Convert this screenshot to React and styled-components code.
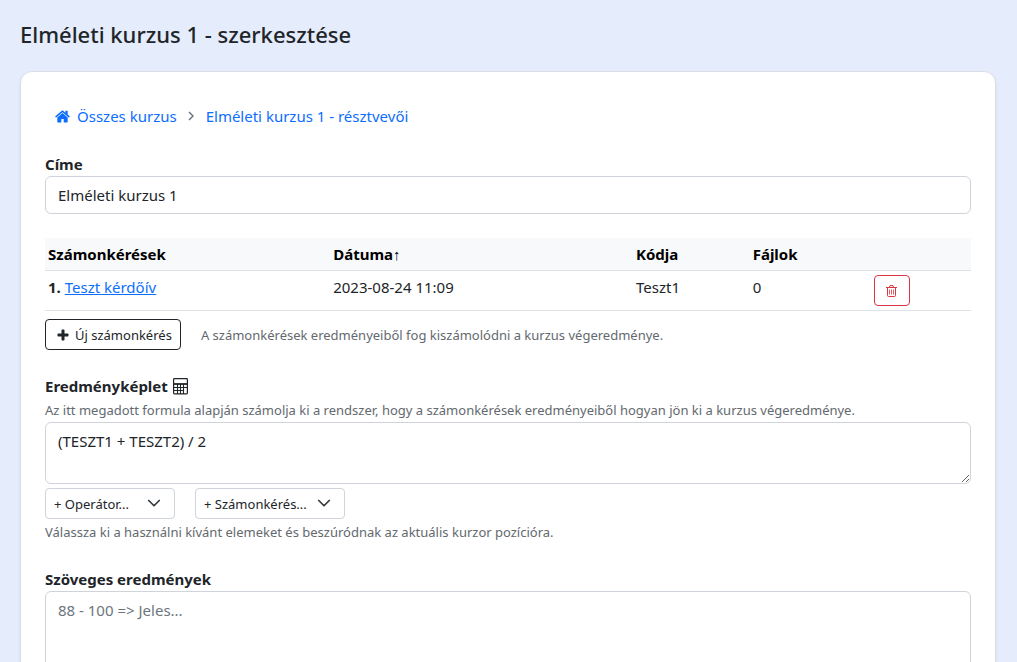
import React from "react";
import styled, { createGlobalStyle } from "styled-components";

const GlobalStyle = createGlobalStyle`
  *, *::before, *::after { box-sizing: border-box; }
  body {
    margin: 0;
    background: #e5ecfc;
    color: #212529;
    font-family: "Segoe UI", "Noto Sans", "Open Sans", sans-serif;
    font-size: 15px;
    line-height: 24px;
  }
  button, input, select, textarea { font: inherit; color: inherit; margin: 0; }
`;

const Page = styled.main`
  padding: 20px 21px 20px 20px;
`;

const Title = styled.h1`
  margin: 0 0 23px;
  font-size: 22px;
  font-weight: 500;
  line-height: 28px;
`;

const Card = styled.form`
  padding: 32px 24px 24px;
  background: #fff;
  border: 1px solid #dcdfe6;
  border-radius: 12px;
  box-shadow: 0 2px 4px rgba(0, 0, 0, 0.06);
`;

const Breadcrumb = styled.nav`
  display: flex;
  align-items: center;
  padding: 0 10px;
  margin-bottom: 24px;
`;

const CrumbLink = styled.a`
  display: inline-flex;
  align-items: center;
  gap: 7px;
  color: #0d6efd;
  text-decoration: none;
`;

const Separator = styled.svg`
  flex: none;
  margin: 0 12px 0 11px;
`;

const Field = styled.div`
  display: flex;
  flex-direction: column;
  align-items: stretch;
  margin-bottom: ${(p) => p.$space || 0}px;
`;

const Label = styled.label`
  display: flex;
  align-items: center;
  gap: 5px;
  font-weight: 700;
`;

const Input = styled.input`
  width: 100%;
  height: 38px;
  padding: 6px 12px;
  background: #fff;
  border: 1px solid #ced4da;
  border-radius: 6px;
`;

const TextArea = styled.textarea`
  display: block;
  width: 100%;
  height: ${(p) => p.$height}px;
  padding: 6px 12px;
  background: #fff;
  border: 1px solid #ced4da;
  border-radius: 6px;
  resize: vertical;

  &::placeholder { color: #6c757d; opacity: 1; }
`;

const Table = styled.table`
  width: 100%;
  table-layout: fixed;
  border-collapse: collapse;
`;

const HeadCell = styled.th`
  width: ${(p) => p.$width};
  padding: 4px 3px;
  text-align: left;
  font-weight: 700;
  color: #000;
  background: #f8f9fa;
  border-bottom: 1px solid #dee2e6;
`;

const Arrow = styled.span`
  font-weight: 400;
`;

const Cell = styled.td`
  padding: 4px 3px;
  vertical-align: top;
  border-bottom: 1px solid #dee2e6;
`;

const TableLink = styled.a`
  color: #0d6efd;
  text-decoration: underline;
`;

const Button = styled.button`
  display: inline-flex;
  align-items: center;
  justify-content: center;
  gap: 6px;
  height: 31px;
  padding: 0 8px 0 11px;
  font-size: 13px;
  line-height: 20px;
  white-space: nowrap;
  color: #212529;
  background: #fff;
  border: 1px solid currentColor;
  border-radius: 4px;
  vertical-align: top;
`;

const DeleteButton = styled(Button)`
  padding: 0 12px 0 11px;
  margin-left: 1px;
  color: #dc3545;
`;

const Actions = styled.div`
  display: flex;
  align-items: center;
  gap: 20px;
  margin: 8px 0 24px;
`;

const Hint = styled.p`
  margin: 0;
  font-size: 13px;
  line-height: ${(p) => (p.$tall ? 26 : 24)}px;
  color: #63696e;
`;

const Selects = styled.div`
  display: flex;
  gap: 20px;
  margin-top: 4px;
`;

const SelectBox = styled.div`
  display: grid;
  align-items: center;
  width: ${(p) => p.$width}px;

  & > * { grid-area: 1 / 1; }
  svg { justify-self: end; margin-right: 14px; pointer-events: none; }
`;

const Select = styled.select`
  appearance: none;
  width: 100%;
  height: 31px;
  padding: 0 30px 0 8px;
  font-size: 13px;
  background: #fff;
  border: 1px solid #ced4da;
  border-radius: 4px;
`;

const HomeIcon = () => (
  <svg width="15" height="13" viewBox="0 0 15 13" fill="currentColor" aria-hidden="true">
    <path d="M7.5 3.1 2.3 7.4v4.4c0 .3.2.6.6.6h3.4V8.9h2.4v3.5h3.4c.4 0 .6-.3.6-.6V7.4z" />
    <path d="m14.7 6.3-2-1.7V1c0-.2-.1-.3-.3-.3h-1.7c-.2 0-.3.1-.3.3v1.7L8.2.8c-.4-.3-1-.3-1.4 0L.3 6.3c-.1.1-.1.3 0 .4l.5.7c.1.1.3.1.5 0l6.2-5.2 6.2 5.2c.2.1.4.1.5 0l.5-.7c.1-.1.1-.3 0-.4z" />
  </svg>
);

const PlusIcon = () => (
  <svg width="12" height="12" viewBox="0 0 12 12" fill="currentColor" aria-hidden="true">
    <path d="M5.3.5h1.4q.8 0 .8.8v3.2h3.2q.8 0 .8.8v1.4q0 .8-.8.8H7.5v3.2q0 .8-.8.8H5.3q-.8 0-.8-.8V7.5H1.3q-.8 0-.8-.8V5.3q0-.8.8-.8h3.2V1.3q0-.8.8-.8z" />
  </svg>
);

const TrashIcon = () => (
  <svg width="11" height="12" viewBox="0 0 11 12" fill="none" stroke="currentColor" aria-hidden="true">
    <path d="M0 2.5h11M3.5 2.3 4 .6h3l.5 1.7M1.5 2.5v8q0 1 1 1h6q1 0 1-1v-8" />
    <path d="M3.5 4.5v5M5.5 4.5v5M7.5 4.5v5" strokeWidth="0.8" />
  </svg>
);

const CalculatorIcon = () => (
  <svg width="15" height="17" viewBox="0 0 15 17" fill="none" stroke="currentColor" aria-hidden="true">
    <rect x=".6" y=".6" width="13.8" height="15.3" rx=".8" strokeWidth="1.2" />
    <path d="M1 6h13" strokeWidth="1.8" />
    <path d="M1 9.5h13M1 12.5h9M4.5 6v10M7.5 6v10M10.5 6v10" strokeWidth="1.1" />
  </svg>
);

const Chevron = () => (
  <svg width="14" height="14" viewBox="0 0 16 16" fill="none" stroke="#343a40" strokeWidth="2" strokeLinecap="round" strokeLinejoin="round" aria-hidden="true">
    <path d="m2 4 6 6 6-6" />
  </svg>
);

export default function App() {
  return (
    <>
      <GlobalStyle />
      <Page>
        <Title>Elméleti kurzus 1 - szerkesztése</Title>
        <Card>
          <Breadcrumb>
            <CrumbLink href="#kurzusok">
              <HomeIcon />
              Összes kurzus
            </CrumbLink>
            <Separator width="6" height="10" viewBox="0 0 6 10" fill="none" stroke="#6c757d" strokeWidth="1.5" aria-hidden="true">
              <path d="m1 1 4 4-4 4" />
            </Separator>
            <CrumbLink href="#resztvevok">Elméleti kurzus 1 - résztvevői</CrumbLink>
          </Breadcrumb>

          <Field $space={24}>
            <Label htmlFor="cim">Címe</Label>
            <Input id="cim" type="text" defaultValue="Elméleti kurzus 1" />
          </Field>

          <Table>
            <thead>
              <tr>
                <HeadCell $width="30.8%">Számonkérések</HeadCell>
                <HeadCell $width="32.7%">Dátuma<Arrow>↑</Arrow></HeadCell>
                <HeadCell $width="12.6%">Kódja</HeadCell>
                <HeadCell $width="13%">Fájlok</HeadCell>
                <HeadCell />
              </tr>
            </thead>
            <tbody>
              <tr>
                <Cell><b>1.</b> <TableLink href="#teszt">Teszt kérdőív</TableLink></Cell>
                <Cell>2023-08-24 11:09</Cell>
                <Cell>Teszt1</Cell>
                <Cell>0</Cell>
                <Cell>
                  <DeleteButton type="button" aria-label="Törlés"><TrashIcon /></DeleteButton>
                </Cell>
              </tr>
            </tbody>
          </Table>

          <Actions>
            <Button type="button"><PlusIcon />Új számonkérés</Button>
            <Hint>A számonkérések eredményeiből fog kiszámolódni a kurzus végeredménye.</Hint>
          </Actions>

          <Field $space={22}>
            <Label htmlFor="keplet">Eredményképlet <CalculatorIcon /></Label>
            <Hint>Az itt megadott formula alapján számolja ki a rendszer, hogy a számonkérések eredményeiből hogyan jön ki a kurzus végeredménye.</Hint>
            <TextArea id="keplet" $height={62} defaultValue="(TESZT1 + TESZT2) / 2" />
            <Selects>
              <SelectBox $width={130}>
                <Select aria-label="Operátor"><option>+ Operátor...</option></Select>
                <Chevron />
              </SelectBox>
              <SelectBox $width={150}>
                <Select aria-label="Számonkérés"><option>+ Számonkérés...</option></Select>
                <Chevron />
              </SelectBox>
            </Selects>
            <Hint $tall>Válassza ki a használni kívánt elemeket és beszúródnak az aktuális kurzor pozícióra.</Hint>
          </Field>

          <Field>
            <Label htmlFor="szoveges">Szöveges eredmények</Label>
            <TextArea id="szoveges" $height={158} placeholder="88 - 100 => Jeles..." />
          </Field>
        </Card>
      </Page>
    </>
  );
}
